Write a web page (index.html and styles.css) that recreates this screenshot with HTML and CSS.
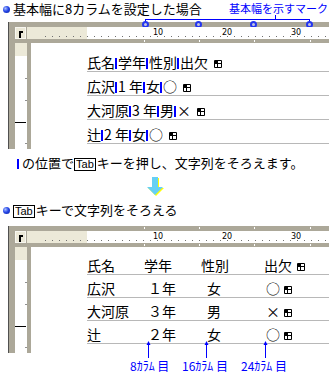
FILE: index.html
```html
<!DOCTYPE html>
<html lang="ja">
<head>
    <meta charset="UTF-8">
    <title>基本幅とタブ</title>
    <link rel="stylesheet" href="styles.css">
</head>
<body>
    <p class="head"><span class="dot"></span>基本幅に8カラムを設定した場合</p>

    <div class="win w1">
        <span class="mark-label">基本幅を示すマーク</span>
        <span class="bracket"></span>
        <span class="bracket-tick"></span>
        <span class="pin p1"></span>
        <span class="pin p2"></span>
        <span class="pin p3"></span>
        <span class="pin p4"></span>

        <div class="band top"></div>
        <div class="ruler-row">
            <span class="tabbtn"><i></i></span>
            <span class="rbox"></span>
            <span class="rmargin"></span>
            <span class="scale">
                <b class="n10">10</b>
                <b class="n20">20</b>
                <b class="n30">30</b>
            </span>
        </div>
        <div class="band bottom">
            <i class="wm m1"></i><i class="wm m2"></i><i class="wm m3"></i><i class="wm m4"></i>
        </div>
        <div class="body">
            <div class="vruler">
                <i class="vt a"></i><i class="vt b"></i><i class="vm"></i><i class="vt d"></i>
            </div>
            <div class="page">
                <div class="line">氏名<i class="tb"></i>学年<i class="tb"></i>性別<i class="tb"></i>出欠<svg class="ret" viewBox="0 0 8 8"><path d="M0.5 0.5h7v7h-7z M0.5 3.5h7 M3.5 0.5v7" fill="none" stroke="#000"/><path d="M1 1h2.5v2.5h-2.5z" fill="#000"/></svg></div>
                <div class="line">広沢<i class="tb"></i>1 年<i class="tb"></i>女<i class="tb"></i>○<svg class="ret" viewBox="0 0 8 8"><path d="M0.5 0.5h7v7h-7z M0.5 3.5h7 M3.5 0.5v7" fill="none" stroke="#000"/><path d="M1 1h2.5v2.5h-2.5z" fill="#000"/></svg></div>
                <div class="line">大河原<i class="tb"></i>3 年<i class="tb"></i>男<i class="tb"></i>×<svg class="ret" viewBox="0 0 8 8"><path d="M0.5 0.5h7v7h-7z M0.5 3.5h7 M3.5 0.5v7" fill="none" stroke="#000"/><path d="M1 1h2.5v2.5h-2.5z" fill="#000"/></svg></div>
                <div class="line">辻<i class="tb"></i>2 年<i class="tb"></i>女<i class="tb"></i>○<svg class="ret" viewBox="0 0 8 8"><path d="M0.5 0.5h7v7h-7z M0.5 3.5h7 M3.5 0.5v7" fill="none" stroke="#000"/><path d="M1 1h2.5v2.5h-2.5z" fill="#000"/></svg></div>
            </div>
        </div>
    </div>

    <p class="note"><i class="tb"></i>の位置で<span class="key">Tab</span>キーを押し、文字列をそろえます。</p>

    <div class="down">
        <svg width="18" height="20" viewBox="0 0 18 20">
            <polygon points="6,1 12,1 12,11 17,11 9,19 1,11 6,11" fill="#ffff00" transform="translate(1,1)"/>
            <polygon points="6,1 12,1 12,11 17,11 9,19 1,11 6,11" fill="#66d0f4"/>
        </svg>
    </div>

    <p class="head two"><span class="dot"></span><span class="key">Tab</span>キーで文字列をそろえる</p>

    <div class="win w2">
        <div class="band top">
            <i class="wm m1"></i><i class="wm m2"></i><i class="wm m3"></i><i class="wm m4"></i>
        </div>
        <div class="ruler-row">
            <span class="tabbtn"><i></i></span>
            <span class="rbox"></span>
            <span class="rmargin"></span>
            <span class="scale">
                <b class="n10">10</b>
                <b class="n20">20</b>
                <b class="n30">30</b>
            </span>
        </div>
        <div class="band bottom">
            <i class="wm m1"></i><i class="wm m2"></i><i class="wm m3"></i><i class="wm m4"></i>
        </div>
        <div class="body">
            <div class="vruler">
                <i class="vt a"></i><i class="vt b"></i><i class="vm"></i><i class="vt d"></i>
            </div>
            <div class="page">
                <div class="row"><span class="c1">氏名</span><span class="c2">学年</span><span class="c3">性別</span><span class="c4">出欠<svg class="ret" viewBox="0 0 8 8"><path d="M0.5 0.5h7v7h-7z M0.5 3.5h7 M3.5 0.5v7" fill="none" stroke="#000"/><path d="M1 1h2.5v2.5h-2.5z" fill="#000"/></svg></span></div>
                <div class="row data"><span class="c1">広沢</span><span class="c2">１年</span><span class="c3">女</span><span class="c4">○<svg class="ret" viewBox="0 0 8 8"><path d="M0.5 0.5h7v7h-7z M0.5 3.5h7 M3.5 0.5v7" fill="none" stroke="#000"/><path d="M1 1h2.5v2.5h-2.5z" fill="#000"/></svg></span></div>
                <div class="row data"><span class="c1">大河原</span><span class="c2">３年</span><span class="c3">男</span><span class="c4">×<svg class="ret" viewBox="0 0 8 8"><path d="M0.5 0.5h7v7h-7z M0.5 3.5h7 M3.5 0.5v7" fill="none" stroke="#000"/><path d="M1 1h2.5v2.5h-2.5z" fill="#000"/></svg></span></div>
                <div class="row data"><span class="c1">辻</span><span class="c2">２年</span><span class="c3">女</span><span class="c4">○<svg class="ret" viewBox="0 0 8 8"><path d="M0.5 0.5h7v7h-7z M0.5 3.5h7 M3.5 0.5v7" fill="none" stroke="#000"/><path d="M1 1h2.5v2.5h-2.5z" fill="#000"/></svg></span></div>
            </div>
        </div>
    </div>

    <div class="notes">
        <svg class="up u8" width="5" height="17" viewBox="0 0 5 17"><path d="M2.5 3v14" stroke="#0000ff"/><polygon points="0.5,4 2.5,0 4.5,4" fill="#0000ff"/></svg>
        <svg class="up u16" width="5" height="17" viewBox="0 0 5 17"><path d="M2.5 3v14" stroke="#0000ff"/><polygon points="0.5,4 2.5,0 4.5,4" fill="#0000ff"/></svg>
        <svg class="up u24" width="5" height="17" viewBox="0 0 5 17"><path d="M2.5 3v14" stroke="#0000ff"/><polygon points="0.5,4 2.5,0 4.5,4" fill="#0000ff"/></svg>
        <span class="col-label l8">8ｶﾗﾑ 目</span>
        <span class="col-label l16">16ｶﾗﾑ 目</span>
        <span class="col-label l24">24ｶﾗﾑ 目</span>
    </div>
</body>
</html>
```

FILE: styles.css
```css
body {
    margin: 0;
    width: 329px;
    overflow: hidden;
    background-color: #fff;
    color: #000;
    font-family: "Noto Sans CJK JP", sans-serif;
}

p {
    margin: 0;
    padding: 0;
}

.head {
    height: 22px;
    line-height: 18px;
    font-size: 13px;
    padding-left: 3px;
    white-space: nowrap;
}

.head.two {
    height: 25px;
    line-height: 17px;
}

.dot {
    display: inline-block;
    width: 7px;
    height: 7px;
    margin-right: 3px;
    border-radius: 50%;
    vertical-align: 1px;
    background: radial-gradient(circle at 35% 35%, #aac0ff 0, #2848e8 45%, #001a9a 100%);
}

.key {
    display: inline-block;
    border: 1px solid #000;
    padding: 0 1px;
    margin: 0 1px 0 0;
    font-family: "Liberation Sans", sans-serif;
    font-size: 11px;
    line-height: 11px;
    vertical-align: 0;
}

/* ventana con regla */
.win {
    position: relative;
    margin-left: 8px;
    border-left: 1px solid #505050;
    background-color: #aca899;
}

.band {
    position: relative;
}

.band.top {
    height: 5px;
}

.band.bottom {
    height: 4px;
}

.wm {
    position: absolute;
    width: 1px;
    height: 2px;
    top: 1px;
    background-color: #fff;
}

.m1 { left: 135px; }
.m2 { left: 190px; }
.m3 { left: 245px; }
.m4 { left: 301px; }

.ruler-row {
    display: flex;
    height: 12px;
    padding-left: 6px;
}

.tabbtn {
    position: relative;
    box-sizing: border-box;
    width: 11px;
    background-color: #ece9d8;
    border: 1px solid #f8f7f0;
}

.tabbtn i {
    position: absolute;
    left: 3px;
    top: 3px;
    width: 2px;
    height: 5px;
    border-left: 2px solid #000;
    border-top: 2px solid #000;
}

.rbox {
    width: 15px;
    margin-left: 1px;
    background-color: #ece9d8;
}

.rmargin {
    width: 45px;
    background: repeating-linear-gradient(to right, #707070 0 1px, transparent 1px 7px) 3px 9px / 100% 1px no-repeat, #ece9d8;
}

.scale {
    position: relative;
    flex: 1;
    background: repeating-linear-gradient(to right, #707070 0 1px, transparent 1px 7px) 0 9px / 100% 1px no-repeat, #fff;
}

.scale b {
    position: absolute;
    top: 2px;
    width: 14px;
    text-align: center;
    font-weight: normal;
    font-family: "DejaVu Sans", sans-serif;
    font-size: 8px;
    line-height: 8px;
}

.n10 { left: 64px; }
.n20 { left: 133px; }
.n30 { left: 202px; }

.body {
    display: flex;
    height: 106px;
}

.vruler {
    position: relative;
    width: 12px;
    margin-left: 6px;
    background: linear-gradient(#ece9d8 0 13px, #fff 13px);
}

.vt {
    position: absolute;
    left: 10px;
    width: 2px;
    height: 1px;
    background-color: #909090;
}

.vt.a { top: 35px; }
.vt.b { top: 57px; }
.vt.d { top: 100px; }

.vm {
    position: absolute;
    left: 0;
    top: 79px;
    width: 11px;
    height: 1px;
    background-color: #000;
}

.page {
    flex: 1;
    margin-left: 4px;
    padding: 5px 0 0 56px;
    background-color: #fff;
    font-size: 14px;
    white-space: nowrap;
}

.line {
    height: 17px;
    padding-top: 6px;
    line-height: 17px;
    border-bottom: 1px solid #b8b8b8;
}

.tb {
    display: inline-block;
    width: 2px;
    height: 11px;
    margin-right: 1px;
    background-color: #0000ff;
    vertical-align: -1px;
}

.ret {
    width: 8px;
    height: 8px;
    margin-left: 6px;
    vertical-align: 0;
}

/* marcas de la regla */
.mark-label {
    position: absolute;
    left: 220px;
    top: -21px;
    font-size: 11px;
    line-height: 14px;
    color: #0000ff;
    white-space: nowrap;
}

.bracket {
    position: absolute;
    left: 136px;
    top: -3px;
    width: 163px;
    height: 3px;
    border: 1px solid #0000ff;
    border-bottom: none;
}

.bracket-tick {
    position: absolute;
    left: 266px;
    top: -7px;
    width: 1px;
    height: 4px;
    background-color: #0000ff;
}

.pin {
    position: absolute;
    top: -1px;
    box-sizing: border-box;
    width: 7px;
    height: 7px;
    border: 2px solid #2436f0;
    border-radius: 50%;
    background-color: #c4c4dc;
}

.p1 { left: 133px; }
.p2 { left: 186px; }
.p3 { left: 241px; }
.p4 { left: 297px; }

/* texto intermedio */
.note {
    margin-top: 5px;
    height: 17px;
    padding-left: 17px;
    line-height: 17px;
    font-size: 13px;
    white-space: nowrap;
}

.note .tb {
    height: 10px;
    margin-right: 3px;
}

.down {
    height: 25px;
    padding-left: 146px;
}

.down svg {
    display: block;
    margin-top: 5px;
}

/* segunda ventana */
.row {
    display: flex;
    height: 17px;
    padding-top: 5px;
    line-height: 17px;
    border-bottom: 1px solid #b8b8b8;
}

.c1, .c2 {
    width: 57px;
}

.c3 {
    width: 63px;
}

.data .c2 {
    padding-left: 4px;
    width: 53px;
}

.data .c3 {
    padding-left: 6px;
    width: 57px;
}

.data .c4 {
    padding-left: 2px;
}

.row .ret {
    margin-left: 5px;
}

.data .ret {
    margin-left: 4px;
}

/* anotaciones de abajo */
.notes {
    position: relative;
    height: 26px;
}

.up {
    position: absolute;
    top: -12px;
}

.u8 { left: 146px; }
.u16 { left: 204px; }
.u24 { left: 263px; }

.col-label {
    position: absolute;
    top: 6px;
    font-size: 12px;
    line-height: 14px;
    color: #0000ff;
    white-space: nowrap;
}

.l8 { left: 130px; }
.l16 { left: 182px; }
.l24 { left: 241px; }
```
